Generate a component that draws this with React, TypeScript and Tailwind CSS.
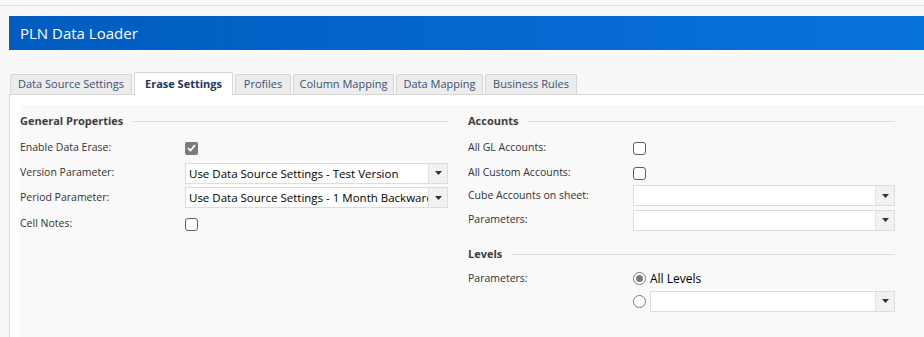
const tabs = [
  { label: 'Data Source Settings', w: 'w-[122px]' },
  { label: 'Erase Settings', w: 'w-[99px]', active: true },
  { label: 'Profiles', w: 'w-[56px]' },
  { label: 'Column Mapping', w: 'w-[101px]' },
  { label: 'Data Mapping', w: 'w-[87px]' },
  { label: 'Business Rules', w: 'w-[92px]' },
];

function SectionTitle({ title }: { title: string }) {
  return (
    <div className="flex h-[26px] items-center">
      <span className="text-[11px] font-bold text-[#3d3d3d]">{title}</span>
      <div className="ml-[10px] h-px flex-1 bg-[#dadde6]" />
    </div>
  );
}

function Checkbox({ checked }: { checked?: boolean }) {
  if (checked) {
    return (
      <div className="flex h-[13px] w-[13px] items-center justify-center rounded-[2px] bg-[#7b7b7b]">
        <svg width="9" height="8" viewBox="0 0 9 8">
          <path d="M1 4.2 L3.5 6.5 L8 1.2" stroke="white" strokeWidth="1.8" fill="none" />
        </svg>
      </div>
    );
  }
  return <div className="h-[13px] w-[13px] rounded-[3px] border border-[#5e5e5e] bg-white" />;
}

function Radio({ checked }: { checked?: boolean }) {
  return (
    <div className="flex h-[13px] w-[13px] shrink-0 items-center justify-center rounded-full border border-[#7a7a7a] bg-white">
      {checked && <div className="h-[7px] w-[7px] rounded-full bg-[#7a7a7a]" />}
    </div>
  );
}

function Select({ value }: { value?: string }) {
  return (
    <div className="flex h-[21px] min-w-0 flex-1 border border-[#dcdcdc] bg-white">
      <div className="min-w-0 flex-1 overflow-hidden whitespace-nowrap pl-[3px] text-[11.5px] leading-[19px] text-black">
        {value}
      </div>
      <div className="flex w-[19px] shrink-0 items-center justify-center border-l border-[#e2e2e2] bg-[#f1f1f1]">
        <svg width="7" height="4" viewBox="0 0 7 4">
          <path d="M0 0 H7 L3.5 4 Z" fill="#333" />
        </svg>
      </div>
    </div>
  );
}

function Row({ label, h, children }: { label: string; h: string; children?: React.ReactNode }) {
  return (
    <div className={`flex items-center ${h}`}>
      <div className="w-[165px] shrink-0 text-[10.5px] text-[#333]">{label}</div>
      <div className="flex min-w-0 flex-1 items-center">{children}</div>
    </div>
  );
}

export default function App() {
  return (
    <div
      className="flex h-[337px] w-[924px] flex-col overflow-hidden bg-[#f8f8f8]"
      style={{ fontFamily: '"Open Sans", "Noto Sans", sans-serif' }}
    >
      <div className="mt-[5px] h-px bg-[#e2e2e2]" />

      <div className="ml-[9px] mt-[10px] flex h-[34px] items-center bg-gradient-to-r from-[#005cbf] to-[#0973dc] pl-[11px]">
        <span className="text-[15px] text-white">PLN Data Loader</span>
      </div>

      <div className="ml-[10px] mt-[22px] flex items-end gap-[2px]">
        {tabs.map((t) =>
          t.active ? (
            <div
              key={t.label}
              className={`${t.w} relative z-10 -mb-px flex h-[23px] items-center justify-center rounded-t-[2px] border border-b-0 border-[#d6d6d6] bg-white text-[11px] font-bold text-[#1d355f]`}
            >
              {t.label}
            </div>
          ) : (
            <div
              key={t.label}
              className={`${t.w} flex h-[20px] items-center justify-center rounded-t-[2px] border border-b-0 border-[#d6d6d6] bg-[#ececec] text-[11px] text-[#3c5075]`}
            >
              {t.label}
            </div>
          )
        )}
      </div>

      <div className="ml-[9px] flex-1 border-l border-t border-[#d8d8d8] bg-white pl-[10px] pt-[10px]">
        <div className="flex h-full gap-[20px] bg-[#f9f9f9] pt-[3px]">
          <div className="flex w-[428px] flex-col">
            <SectionTitle title="General Properties" />
            <Row label="Enable Data Erase:" h="h-[28px]">
              <Checkbox checked />
            </Row>
            <Row label="Version Parameter:" h="h-[22px]">
              <Select value="Use Data Source Settings - Test Version" />
            </Row>
            <Row label="Period Parameter:" h="h-[27px]">
              <Select value="Use Data Source Settings - 1 Month Backwards" />
            </Row>
            <Row label="Cell Notes:" h="h-[26px]">
              <Checkbox />
            </Row>
          </div>

          <div className="flex w-[427px] flex-col">
            <SectionTitle title="Accounts" />
            <Row label="All GL Accounts:" h="h-[28px]">
              <Checkbox />
            </Row>
            <Row label="All Custom Accounts:" h="h-[22px]">
              <Checkbox />
            </Row>
            <Row label="Cube Accounts on sheet:" h="h-[23px]">
              <Select />
            </Row>
            <Row label="Parameters:" h="h-[26px]">
              <Select />
            </Row>
            <div className="mt-[8px]">
              <SectionTitle title="Levels" />
            </div>
            <div className="flex">
              <div className="flex h-[23px] w-[165px] shrink-0 items-center text-[10.5px] text-[#333]">Parameters:</div>
              <div className="flex min-w-0 flex-1 flex-col">
                <div className="flex h-[23px] items-center gap-[4px]">
                  <Radio checked />
                  <span className="text-[12px] text-black">All Levels</span>
                </div>
                <div className="flex h-[22px] items-center gap-[4px]">
                  <Radio />
                  <Select />
                </div>
              </div>
            </div>
          </div>
        </div>
      </div>
    </div>
  );
}
